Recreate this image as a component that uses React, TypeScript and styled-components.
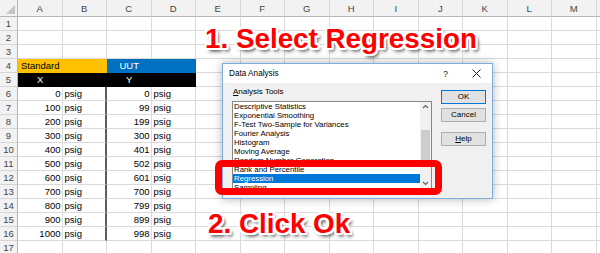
import React from 'react';
import styled, { createGlobalStyle } from 'styled-components';

const Global = createGlobalStyle`
  html, body { margin: 0; padding: 0; background: #fff; }
  body { width: 600px; height: 253px; overflow: hidden; font-family: "Liberation Sans", Arial, sans-serif; }
`;

const Page = styled.div`
  position: relative;
  width: 600px;
  height: 253px;
  overflow: hidden;
  background: #fff;
`;

const Sheet = styled.div`
  display: grid;
  grid-template-columns: 18px repeat(13, 44.5px) 1fr;
  grid-template-rows: 17px;
  grid-auto-rows: 14px;
  width: 600px;
  font-family: "Liberation Sans", Arial, sans-serif;
  font-size: 9.5px;
  color: #000;
`;

const Corner = styled.div`
  position: relative;
  box-sizing: border-box;
  background: #f2f2f2;
  border-right: 1px solid #b5b5b5;
  border-bottom: 1px solid #b5b5b5;
`;

const CornerTriangle = styled.div`
  position: absolute;
  right: 2px;
  bottom: 2px;
  width: 0;
  height: 0;
  border-left: 9px solid transparent;
  border-bottom: 9px solid #c4c4c4;
`;

const ColHead = styled.div`
  box-sizing: border-box;
  background: #f2f2f2;
  border-right: 1px solid #d6d6d6;
  border-bottom: 1px solid #b5b5b5;
  color: #444;
  text-align: center;
  line-height: 17px;
  overflow: hidden;
`;

const RowHead = styled.div`
  box-sizing: border-box;
  background: #f2f2f2;
  border-right: 1px solid #b5b5b5;
  border-bottom: 1px solid #d6d6d6;
  color: #444;
  text-align: center;
  line-height: 13px;
`;

const Cell = styled.div<{ $fill?: string; $align?: 'left' | 'right' | 'center'; $ink?: string; $thickRight?: boolean }>`
  box-sizing: border-box;
  border-right: ${p => (p.$thickRight ? '2px solid #5c5c5c' : `1px solid ${p.$fill ?? '#dadada'}`)};
  border-bottom: 1px solid ${p => p.$fill ?? '#dadada'};
  background: ${p => p.$fill ?? '#fff'};
  color: ${p => p.$ink ?? '#000'};
  text-align: ${p => p.$align ?? 'left'};
  line-height: 13px;
  padding: 0 1px 0 2px;
  white-space: nowrap;
  overflow: hidden;
`;

const Callout = styled.div<{ $left: number; $top: number }>`
  position: absolute;
  left: ${p => p.$left}px;
  top: ${p => p.$top}px;
  font-family: "Liberation Sans", Arial, sans-serif;
  font-weight: 700;
  font-size: 27.8px;
  line-height: 28px;
  color: #ff0000;
  white-space: nowrap;
  text-shadow:
    -2px -2px 0 #fff, -1px -2px 0 #fff, 0 -2px 0 #fff, 1px -2px 0 #fff, 2px -2px 0 #fff,
    2px -1px 0 #fff, 2px 0 0 #fff, 2px 1px 0 #fff, 2px 2px 0 #fff,
    1px 2px 0 #fff, 0 2px 0 #fff, -1px 2px 0 #fff, -2px 2px 0 #fff,
    -2px 1px 0 #fff, -2px 0 0 #fff, -2px -1px 0 #fff,
    3px 3px 3px rgba(0, 0, 0, 0.55), 2px 4px 4px rgba(0, 0, 0, 0.35);
`;

const Dialog = styled.div`
  position: absolute;
  left: 222px;
  top: 63px;
  width: 271px;
  height: 136px;
  box-sizing: border-box;
  border: 1px solid #7eaee0;
  background: #f0f0f0;
  box-shadow: 0 0 9px rgba(0, 0, 0, 0.3);
  display: flex;
  flex-direction: column;
  font-family: "Liberation Sans", Arial, sans-serif;
  font-size: 8px;
  color: #000;
`;

const TitleBar = styled.div`
  height: 19px;
  background: #fff;
  display: flex;
  align-items: center;
  padding-left: 6px;
`;

const Title = styled.div`
  flex: 1;
  line-height: 19px;
  font-size: 8.2px;
`;

const TitleButton = styled.div`
  width: 31px;
  height: 19px;
  display: flex;
  align-items: center;
  justify-content: center;
  font-size: 9px;
  color: #222;
`;

const Body = styled.div`
  flex: 1;
  display: flex;
  gap: 9px;
  padding: 4px 6px 0 9px;
`;

const LeftCol = styled.div`
  width: 200px;
  display: flex;
  flex-direction: column;
  gap: 4px;
`;

const Label = styled.div`
  height: 10px;
  line-height: 10px;
  padding-left: 1px;
`;

const ListBox = styled.div`
  height: 88px;
  box-sizing: border-box;
  border: 1px solid #828790;
  background: #fff;
  display: flex;
  overflow: hidden;
`;

const Items = styled.div`
  flex: 1;
  overflow: hidden;
`;

const Item = styled.div<{ $selected?: boolean }>`
  height: 9px;
  line-height: 9px;
  padding-left: 1px;
  font-size: 7.8px;
  white-space: nowrap;
  background: ${p => (p.$selected ? '#0078d7' : 'transparent')};
  color: ${p => (p.$selected ? '#fff' : '#000')};
`;

const ScrollBar = styled.div`
  width: 11px;
  background: #f0f0f0;
  display: flex;
  flex-direction: column;
`;

const ScrollArrow = styled.div`
  height: 9px;
  display: flex;
  align-items: center;
  justify-content: center;
`;

const ScrollTrack = styled.div`
  flex: 1;
  padding-top: 19px;
`;

const Thumb = styled.div`
  height: 30px;
  margin: 0 1px;
  background: #cdcdcd;
`;

const RightCol = styled.div`
  width: 45px;
  display: flex;
  flex-direction: column;
  gap: 4px;
  padding-top: 3px;
`;

const Button = styled.div<{ $default?: boolean; $gapAbove?: number }>`
  height: 14px;
  box-sizing: border-box;
  border: 1px solid ${p => (p.$default ? '#0078d7' : '#adadad')};
  background: #e1e1e1;
  text-align: center;
  line-height: 12px;
  font-size: 8px;
  margin-top: ${p => p.$gapAbove ?? 0}px;
`;

const RedFrame = styled.div`
  position: absolute;
  left: 215px;
  top: 160px;
  width: 227px;
  height: 35px;
  box-sizing: border-box;
  border: 7.5px solid #ff0000;
  border-radius: 7px;
`;

const COLS = ['A', 'B', 'C', 'D', 'E', 'F', 'G', 'H', 'I', 'J', 'K', 'L', 'M', ''];
const X_VALUES = [0, 100, 200, 300, 400, 500, 600, 700, 800, 900, 1000];
const Y_VALUES = [0, 99, 199, 300, 401, 502, 601, 700, 799, 899, 998];
const TOOLS = [
  'Descriptive Statistics',
  'Exponential Smoothing',
  'F-Test Two-Sample for Variances',
  'Fourier Analysis',
  'Histogram',
  'Moving Average',
  'Random Number Generation',
  'Rank and Percentile',
  'Regression',
  'Sampling',
];

const ORANGE = '#ffc000';
const BLUE = '#0070c0';
const BLACK = '#000000';

function EmptyCells({ from }: { from: number }) {
  return (
    <>
      {COLS.slice(from).map((c, i) => (
        <Cell key={`${c}-${i}`} />
      ))}
    </>
  );
}

function Chevron({ up }: { up?: boolean }) {
  return (
    <svg width="7" height="5" viewBox="0 0 7 5">
      <path
        d={up ? 'M1 4 L3.5 1.5 L6 4' : 'M1 1 L3.5 3.5 L6 1'}
        fill="none"
        stroke="#606060"
        strokeWidth="1.1"
      />
    </svg>
  );
}

export default function App() {
  const rows: React.ReactNode[] = [];
  for (let r = 1; r <= 17; r++) {
    const cells: React.ReactNode[] = [<RowHead key="h">{r}</RowHead>];
    if (r === 4) {
      cells.push(
        <Cell key="a" $fill={ORANGE} $align="center">Standard</Cell>,
        <Cell key="b" $fill={ORANGE} />,
        <Cell key="c" $fill={BLUE} $align="center" $ink="#fff">UUT</Cell>,
        <Cell key="d" $fill={BLUE} />,
        <EmptyCells key="rest" from={4} />
      );
    } else if (r === 5) {
      cells.push(
        <Cell key="a" $fill={BLACK} $align="center" $ink="#fff">X</Cell>,
        <Cell key="b" $fill={BLACK} />,
        <Cell key="c" $fill={BLACK} $align="center" $ink="#fff">Y</Cell>,
        <Cell key="d" $fill={BLACK} />,
        <EmptyCells key="rest" from={4} />
      );
    } else if (r >= 6 && r <= 16) {
      const i = r - 6;
      cells.push(
        <Cell key="a" $align="right">{X_VALUES[i]}</Cell>,
        <Cell key="b" $thickRight>psig</Cell>,
        <Cell key="c" $align="right">{Y_VALUES[i]}</Cell>,
        <Cell key="d">psig</Cell>,
        <EmptyCells key="rest" from={4} />
      );
    } else {
      cells.push(<EmptyCells key="rest" from={0} />);
    }
    rows.push(<React.Fragment key={r}>{cells}</React.Fragment>);
  }

  return (
    <Page>
      <Global />
      <Sheet>
        <Corner>
          <CornerTriangle />
        </Corner>
        {COLS.map((c, i) => (
          <ColHead key={`${c}-${i}`}>{c}</ColHead>
        ))}
        {rows}
      </Sheet>

      <Dialog>
        <TitleBar>
          <Title>Data Analysis</Title>
          <TitleButton>?</TitleButton>
          <TitleButton>
            <svg width="9" height="9" viewBox="0 0 9 9">
              <path d="M0.5 0.5 L8.5 8.5 M8.5 0.5 L0.5 8.5" stroke="#222" strokeWidth="1" />
            </svg>
          </TitleButton>
        </TitleBar>
        <Body>
          <LeftCol>
            <Label>
              <u>A</u>nalysis Tools
            </Label>
            <ListBox>
              <Items>
                {TOOLS.map(t => (
                  <Item key={t} $selected={t === 'Regression'}>
                    {t}
                  </Item>
                ))}
              </Items>
              <ScrollBar>
                <ScrollArrow>
                  <Chevron up />
                </ScrollArrow>
                <ScrollTrack>
                  <Thumb />
                </ScrollTrack>
                <ScrollArrow>
                  <Chevron />
                </ScrollArrow>
              </ScrollBar>
            </ListBox>
          </LeftCol>
          <RightCol>
            <Button $default>OK</Button>
            <Button>Cancel</Button>
            <Button $gapAbove={6}>
              <u>H</u>elp
            </Button>
          </RightCol>
        </Body>
      </Dialog>

      <RedFrame />
      <Callout $left={205} $top={25}>1. Select Regression</Callout>
      <Callout $left={208} $top={210}>2. Click Ok</Callout>
    </Page>
  );
}
